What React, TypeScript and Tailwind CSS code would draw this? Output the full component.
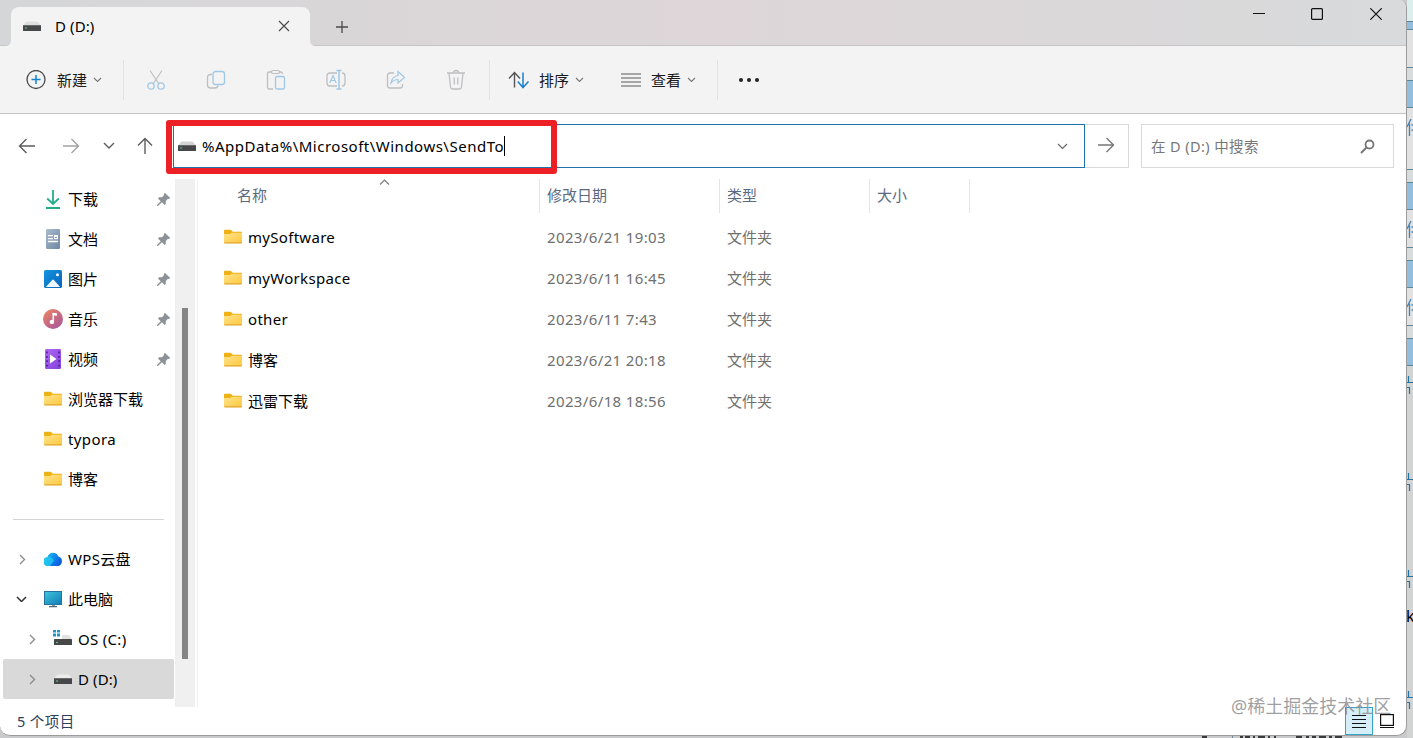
import React from "react";

type IconProps = { className?: string };

const FONT = "font-['Noto_Sans','Noto_Sans_CJK_SC',sans-serif]";

function Svg({ w, h, className = "", children }: { w: number; h: number; className?: string; children: React.ReactNode }) {
  return (
    <svg width={w} height={h} viewBox={`0 0 ${w} ${h}`} fill="none" className={`block shrink-0 ${className}`}>
      {children}
    </svg>
  );
}

function Drive({ top = "#dedede", className }: IconProps & { top?: string }) {
  return (
    <Svg w={18} h={18} className={className}>
      <path d="M3.500 4.500h11L18 8.500H0z" fill={top} />
      <rect x="0" y="8" width="18" height="6" rx="0.6" fill="#454748" />
      <rect x="0" y="8" width="18" height="1" fill="#6a6a6a" />
      <circle cx="3" cy="11" r="0.8" fill="#6fe0b0" />
    </Svg>
  );
}

function SystemDrive() {
  return (
    <Svg w={19} h={18}>
      <path d="M9 5h7l3 4H9z" fill="#e2e2e2" />
      <rect x="1" y="9" width="18" height="6" rx="0.6" fill="#454748" />
      <circle cx="4" cy="12.500" r="0.8" fill="#6fe0b0" />
      <path d="M0 0h3v2.500H0zM4 0h3v2.500H4zM0 3.500h3v3H0zM4 3.500h3v3H4z" fill="#1c96c8" />
    </Svg>
  );
}

function Folder() {
  return (
    <Svg w={18} h={18}>
      <defs>
        <linearGradient id="folder" x1="0" y1="0" x2="1" y2="1">
          <stop stopColor="#ffe38b" />
          <stop offset="1" stopColor="#fdc83d" />
        </linearGradient>
      </defs>
      <path d="M0 2.500q0-.8.8-.8h5.300q.6 0 1 .4l1.700 1.600h8.400q.8 0 .8.800v6H0z" fill="#eeb116" />
      <path d="M0 6h6.200l1.600-1.300H18V14.500q0 .8-.8.8H.8q-.8 0-.8-.8z" fill="url(#folder)" />
      <path d="M0 14.200h18v.4q0 .8-.8.8H.8q-.8 0-.8-.8z" fill="#e2a93a" />
    </Svg>
  );
}

function Download() {
  return (
    <Svg w={18} h={20}>
      <path d="M9 1v14M3.200 9.500l5.800 5.500L14.800 9.500" stroke="#23ae8b" strokeWidth="1.800" />
      <path d="M2 19h14" stroke="#23ae8b" strokeWidth="2" />
    </Svg>
  );
}

function Doc() {
  return (
    <Svg w={18} h={20}>
      <defs>
        <linearGradient id="doc" x1="0" y1="0" x2="1" y2="1">
          <stop stopColor="#a9bccd" />
          <stop offset="1" stopColor="#6d87a2" />
        </linearGradient>
      </defs>
      <rect x="2" y="0" width="14" height="20" rx="1.200" fill="url(#doc)" />
      <path d="M4 6.700h5M4 9.600h5M4 12.500h10" stroke="#fff" strokeWidth="1.300" />
      <rect x="10" y="6" width="4" height="4.200" fill="#fff" />
      <path d="M11 8.500h2" stroke="#8097ad" />
    </Svg>
  );
}

function Picture() {
  return (
    <Svg w={18} h={18}>
      <defs>
        <linearGradient id="pic" x1="0" y1="0" x2="1" y2="1">
          <stop stopColor="#1495e0" />
          <stop offset="1" stopColor="#0862b8" />
        </linearGradient>
      </defs>
      <rect width="18" height="18" rx="1.500" fill="url(#pic)" />
      <path d="M1.800 17 8.200 10q.8-.8 1.600 0l6.400 7z" fill="#eef7ff" />
      <circle cx="13.500" cy="4.700" r="1.500" fill="#fff" />
    </Svg>
  );
}

function Music() {
  return (
    <Svg w={20} h={20} className="-mx-px">
      <defs>
        <linearGradient id="mus" x1="0" y1="0" x2="0.8" y2="1">
          <stop stopColor="#f08561" />
          <stop offset="1" stopColor="#a9579c" />
        </linearGradient>
      </defs>
      <circle cx="10" cy="10" r="10" fill="url(#mus)" />
      <path d="M10.300 4v8.500" stroke="#fff" strokeWidth="1.500" />
      <path d="M9.600 3.700 14 4.200v2.600l-4.400-.6z" fill="#fff" />
      <circle cx="8.900" cy="12.900" r="2.200" fill="#fff" />
    </Svg>
  );
}

function Video() {
  return (
    <Svg w={18} h={20}>
      <defs>
        <linearGradient id="vid" x1="0" y1="0" x2="1" y2="1">
          <stop stopColor="#b069f2" />
          <stop offset="1" stopColor="#8341dc" />
        </linearGradient>
      </defs>
      <rect x="1" y="0" width="16" height="20" rx="1.200" fill="url(#vid)" />
      <path d="M3 2.500v16M15 2.500v16" stroke="#4a1c92" strokeWidth="1.600" strokeDasharray="1.800 2.600" />
      <path d="M6 5.500v9l6.500-4.500z" fill="#fff" />
    </Svg>
  );
}

function Cloud() {
  return (
    <Svg w={18} h={16}>
      <defs>
        <linearGradient id="cloud" x1="0" y1="0" x2="1" y2="0.6">
          <stop stopColor="#2de0e0" />
          <stop offset="0.5" stopColor="#1293f2" />
          <stop offset="1" stopColor="#0c5ce0" />
        </linearGradient>
      </defs>
      <path d="M4.200 15A4.300 4.300 0 0 1 3.500 6 5.700 5.700 0 0 1 14.400 5.600a4.800 4.800 0 0 1-.8 9.400z" fill="url(#cloud)" />
      <path d="M3.500 6q4.500-.5 6.500 3.500L6 15H4.200A4.300 4.300 0 0 1 3.500 6" fill="#25cdf0" opacity=".75" />
    </Svg>
  );
}

function Monitor() {
  return (
    <Svg w={18} h={18}>
      <defs>
        <linearGradient id="mon" x1="0" y1="0" x2="1" y2="1">
          <stop stopColor="#3cc6dd" />
          <stop offset="1" stopColor="#147bb6" />
        </linearGradient>
      </defs>
      <rect x=".5" y="1.500" width="17" height="13" fill="url(#mon)" stroke="#23749f" />
      <path d="M8 15h3v1.300H8z" fill="#8b9aa5" />
      <path d="M5 16.600h8" stroke="#596771" strokeWidth="1.200" />
    </Svg>
  );
}

function Pin() {
  return (
    <Svg w={13} h={13}>
      <path d="M8 0 13 4.800 12.300 6 10.600 5.900 8.700 8.200 8.800 11 7.700 12 4.900 9.300 1 13 0 12.900 .1 12 3.700 8.200 1 5.400 2 4.200 4.900 4.300 7 2.200 7 .8z" fill="#8d9297" />
    </Svg>
  );
}

function Chevron({ dir = "down", w = 8, color = "#777", sw = 1.1 }: { dir?: "down" | "right" | "up"; w?: number; color?: string; sw?: number }) {
  const h = w / 2 + 2;
  if (dir === "right")
    return (
      <Svg w={h} h={w + 2}>
        <path d={`M1 1 ${h - 1} ${w / 2 + 1} 1 ${w + 1}`} stroke={color} strokeWidth={sw} />
      </Svg>
    );
  return (
    <Svg w={w + 2} h={h}>
      <path d={dir === "down" ? `M1 1 ${w / 2 + 1} ${h - 1} ${w + 1} 1` : `M1 ${h - 1} ${w / 2 + 1} 1 ${w + 1} ${h - 1}`} stroke={color} strokeWidth={sw} />
    </Svg>
  );
}

function Arrow({ color, className = "" }: { color: string; className?: string }) {
  return (
    <Svg w={18} h={16} className={className}>
      <path d="M1 8h15.500M9.500 1l7 7-7 7" stroke={color} strokeWidth="1.400" />
    </Svg>
  );
}

const GRAY = "#bdbfc1";
const BLUE = "#9fc8e6";

const tools: React.ReactNode[] = [
  <Svg w={20} h={22} key="cut">
    <path d="M4 1.500 13 15M16 1.500 7 15" stroke={GRAY} strokeWidth="1.200" />
    <circle cx="5" cy="17" r="3.200" stroke={BLUE} strokeWidth="1.300" />
    <circle cx="15" cy="17" r="3.200" stroke={BLUE} strokeWidth="1.300" />
  </Svg>,
  <Svg w={20} h={20} key="copy">
    <path d="M6 4.500H4.500Q1.500 4.500 1.500 7.500v7.500q0 3 3 3H9q2.500 0 3-2.500" stroke={GRAY} strokeWidth="1.300" />
    <rect x="7" y="1.500" width="11.500" height="13" rx="2.500" stroke={BLUE} strokeWidth="1.300" />
  </Svg>,
  <Svg w={20} h={22} key="paste">
    <path d="M5 3H3Q1.500 3 1.500 4.500v14Q1.500 20 3 20h4M13 3h2q1.300 0 1.500 2" stroke={GRAY} strokeWidth="1.300" />
    <rect x="5.500" y="1.500" width="8" height="3" rx="1.500" stroke={GRAY} strokeWidth="1.200" />
    <rect x="9.500" y="7.500" width="9" height="12.500" rx="1.500" stroke={BLUE} strokeWidth="1.300" />
  </Svg>,
  <Svg w={20} h={22} key="rename">
    <path d="M11 4H4Q1 4 1 7v7q0 3 3 3h7M16 4q3 0 3 3v7q0 3-3 3" stroke={GRAY} strokeWidth="1.300" />
    <path d="M3.800 14 7 6.500l3.200 7.500M5 11.500h4" stroke={BLUE} strokeWidth="1.200" />
    <path d="M10.500 1.500h5M10.500 20h5M13 1.500V20" stroke={BLUE} strokeWidth="1.500" />
  </Svg>,
  <Svg w={20} h={20} key="share">
    <path d="M8 3H4Q1.500 3 1.500 5.500v10Q1.500 18 4 18h10q2.500 0 2.500-2.500V14" stroke={GRAY} strokeWidth="1.300" />
    <path d="M12 1.500 18.500 7.500 12 13V9.500Q8 9.500 5 13 6 6.500 12 5.500z" stroke={BLUE} strokeWidth="1.200" />
  </Svg>,
  <Svg w={20} h={22} key="delete">
    <path d="M1 4h18M3 4l1.500 14Q4.800 20 6.500 20h7q1.700 0 2-2L17 4M7.500 4q0-2.500 2.500-2.500T12.500 4M8.200 8.500v7M11.800 8.500v7" stroke={GRAY} strokeWidth="1.300" />
  </Svg>,
];

function Toolbar() {
  return (
    <div className="flex h-[68px] items-center border-b border-[#c6c6c6] bg-[#f4f3f4] pl-[26px]">
      <div className="flex w-[97px] items-center">
        <Svg w={20} h={20}>
          <circle cx="10" cy="9.500" r="9" stroke="#4a4a4a" strokeWidth="1.300" />
          <path d="M10 5v9M5.500 9.500h9" stroke="#1582d0" strokeWidth="1.500" />
        </Svg>
        <span className="ml-[11px] mr-[6px]">新建</span>
        <Chevron w={7} />
      </div>
      <div className="h-10 w-px bg-[#e2e2e2]" />
      <div className="ml-[22px] flex items-center gap-10">{tools}</div>
      <div className="ml-[23px] h-10 w-px bg-[#e2e2e2]" />
      <div className="ml-[18px] flex w-[113px] items-center">
        <Svg w={22} h={20}>
          <path d="M6.500 17.500V3M1 8.500l5.500-6 5.500 6" stroke="#555" strokeWidth="1.400" />
          <path d="M15 2.500V17M9.800 11.500 15 17.500l5.500-6" stroke="#1a80cc" strokeWidth="1.500" />
        </Svg>
        <span className="ml-[9px] mr-[6px]">排序</span>
        <Chevron w={7} />
      </div>
      <div className="flex w-[96px] items-center">
        <Svg w={20} h={16}>
          <path d="M0 2h20M0 6h20M0 10h20M0 14h20" stroke="#5a5a5a" strokeWidth="1.100" />
        </Svg>
        <span className="ml-[10px] mr-[6px]">查看</span>
        <Chevron w={7} />
      </div>
      <div className="h-10 w-px bg-[#e2e2e2]" />
      <Svg w={22} h={6} className="ml-[20px] mt-px">
        <circle cx="3" cy="3" r="2" fill="#222" />
        <circle cx="11" cy="3" r="2" fill="#222" />
        <circle cx="19" cy="3" r="2" fill="#222" />
      </Svg>
    </div>
  );
}

function TitleBar() {
  return (
    <div className="flex h-[46px] border-b border-[#c6c6c6] bg-linear-to-r from-[#d5d6d8] via-[#ded6d8] to-[#d8dadb] pl-[11px]">
      <div className="relative mt-[7px] flex h-[39px] w-[299px] items-center rounded-t-[8px] bg-[#f4f3f4] pb-[2px]">
        <Svg w={6} h={6} className="absolute bottom-0 -left-[6px]">
          <path d="M6 0v6H0Q6 6 6 0" fill="#f4f3f4" />
        </Svg>
        <Svg w={6} h={6} className="absolute bottom-0 -right-[6px]">
          <path d="M0 0v6h6Q0 6 0 0" fill="#f4f3f4" />
        </Svg>
        <Drive className="ml-3" />
        <span className="ml-[14px] w-[223px] tracking-[0.1px] text-black">D (D:)</span>
        <Svg w={12} h={12}>
          <path d="M1 1 11 11M11 1 1 11" stroke="#4b4b4b" strokeWidth="1.200" />
        </Svg>
      </div>
      <Svg w={12} h={12} className="ml-[26px] mt-[21px]">
        <path d="M6 0v12M0 6h12" stroke="#4b4b4b" strokeWidth="1.300" />
      </Svg>
      <div className="ml-auto flex gap-[46px] pr-[24px] pt-2">
        <Svg w={12} h={12} className="-ml-px mr-px">
          <path d="M0 5.500h12" stroke="#111" />
        </Svg>
        <Svg w={12} h={12} className="-ml-px mr-px">
          <rect x=".6" y=".6" width="10.800" height="10.800" rx="1" stroke="#111" strokeWidth="1.200" />
        </Svg>
        <Svg w={12} h={12}>
          <path d="M.3.3 11.700 11.700M11.700.3.3 11.700" stroke="#111" strokeWidth="1.200" />
        </Svg>
      </div>
    </div>
  );
}

function NavBar() {
  return (
    <div className="relative flex h-[65px] items-start pt-[10px]">
      <div className="flex h-11 w-[173px] items-center">
        <Arrow color="#5c5c5c" className="ml-[18px] rotate-180" />
        <Arrow color="#a2a2a2" className="ml-[26px]" />
        <div className="-mt-px ml-[23px]">
          <Chevron w={10} color="#5c5c5c" sw={1.4} />
        </div>
        <Arrow color="#5c5c5c" className="ml-[21px] -rotate-90" />
      </div>
      <div className="flex h-11 w-[912px] items-center border border-[#1f72ac] pl-1">
        <Drive top="#d4d4d4" />
        <span className="ml-[6px] whitespace-nowrap tracking-[0.5px] text-black">%AppData%\Microsoft\Windows\SendTo</span>
        <div className="h-5 w-px bg-black" />
        <div className="ml-auto mr-[16px]">
          <Chevron w={9} color="#666" />
        </div>
      </div>
      <div className="flex h-11 w-11 items-center border border-l-0 border-[#d9d9d9] pl-3">
        <Arrow color="#777" className="-mt-[2px]" />
      </div>
      <div className="ml-3 flex h-11 w-[253px] items-center justify-between border border-[#d9d9d9] pl-[9px] pr-[18px] text-[14.5px] text-[#777]">
        <span className="tracking-[0.4px]">在 D (D:) 中搜索</span>
        <Svg w={15} h={15}>
          <circle cx="9.500" cy="5.500" r="4" stroke="#777" strokeWidth="1.800" />
          <path d="M6.700 8.300 1 14" stroke="#777" strokeWidth="2" />
        </Svg>
      </div>
      <div className="absolute left-[166px] top-[6px] h-[54px] w-[391px] rounded-[3px] border-[6px] border-[#ec2025]" />
    </div>
  );
}

const pinned: { label: string; icon: React.ReactNode; pin?: boolean }[] = [
  { label: "下载", icon: <Download />, pin: true },
  { label: "文档", icon: <Doc />, pin: true },
  { label: "图片", icon: <Picture />, pin: true },
  { label: "音乐", icon: <Music />, pin: true },
  { label: "视频", icon: <Video />, pin: true },
  { label: "浏览器下载", icon: <Folder /> },
  { label: "typora", icon: <Folder /> },
  { label: "博客", icon: <Folder /> },
];

function Sidebar() {
  return (
    <div className="w-[175px] text-black">
      {pinned.map((p) => (
        <div key={p.label} className="flex h-10 items-center pl-11 pr-[5px]">
          {p.icon}
          <span className={`ml-[6px] flex-1 whitespace-nowrap ${p.label === "typora" ? "tracking-[0.4px]" : ""}`}>{p.label}</span>
          {p.pin && <Pin />}
        </div>
      ))}
      <div className="flex h-10 items-center pl-[13px] pr-[11px]">
        <div className="mt-px h-px flex-1 bg-[#d4d4d4]" />
      </div>
      <div className="flex h-10 items-center">
        <div className="ml-[19px] w-[25px]">
          <Chevron dir="right" w={9} color="#8c8c8c" sw={1.4} />
        </div>
        <Cloud />
        <span className="ml-[6px] tracking-[0.3px]">WPS云盘</span>
      </div>
      <div className="flex h-10 items-center">
        <div className="ml-4 w-7">
          <Chevron w={9} color="#333" sw={1.5} />
        </div>
        <Monitor />
        <span className="ml-[6px]">此电脑</span>
      </div>
      <div className="flex h-10 items-center">
        <div className="ml-[29px] w-6">
          <Chevron dir="right" w={9} color="#8c8c8c" sw={1.4} />
        </div>
        <SystemDrive />
        <span className="ml-[6px] tracking-[0.3px]">OS (C:)</span>
      </div>
      <div className="ml-[3px] flex h-10 w-[171px] items-center rounded-[2px] bg-[#d9d9d9]">
        <div className="ml-[26px] w-[25px]">
          <Chevron dir="right" w={9} color="#8c8c8c" sw={1.4} />
        </div>
        <Drive top="#ececec" />
        <span className="ml-[6px] tracking-[0.1px]">D (D:)</span>
      </div>
    </div>
  );
}

const files = [
  ["mySoftware", "2023/6/21 19:03"],
  ["myWorkspace", "2023/6/11 16:45"],
  ["other", "2023/6/11 7:43"],
  ["博客", "2023/6/21 20:18"],
  ["迅雷下载", "2023/6/18 18:56"],
];

function FileList() {
  return (
    <div className="flex-1">
      <div className="relative mb-[3px] flex h-[34px] text-[#5b6a80]">
        <div className="flex w-[342px] items-center border-r border-[#e4e4e4] pb-[2px] pl-[39px]">名称</div>
        <div className="flex w-[180px] items-center border-r border-[#e4e4e4] pb-[2px] pl-[7px]">修改日期</div>
        <div className="flex w-[150px] items-center border-r border-[#e4e4e4] pb-[2px] pl-[7px]">类型</div>
        <div className="flex w-[100px] items-center border-r border-[#e4e4e4] pb-[2px] pl-[7px]">大小</div>
        <div className="absolute left-[181px] top-0">
          <Chevron dir="up" w={9} color="#777" />
        </div>
      </div>
      {files.map(([name, date]) => (
        <div key={name} className="flex h-[41px] items-center text-[#6f6f6f]">
          <div className="flex w-[349px] items-center pl-[26px] text-black">
            <Folder />
            <span className={`ml-[6px] ${/^[a-z]/.test(name) ? "tracking-[0.3px]" : ""}`}>{name}</span>
          </div>
          <div className="w-[180px] tracking-[0.37px]">{date}</div>
          <div>文件夹</div>
        </div>
      ))}
    </div>
  );
}

function StatusBar() {
  return (
    <div className="relative flex h-[28px] items-center pl-[17px] text-[14.500px] text-[#2c405a]">
      <span className="tracking-[0.4px]">5 个项目</span>
      <div className="ml-auto flex h-full items-start pr-[12px]">
        <div className="flex h-[28px] w-[28px] items-center justify-center border border-[#35a5cb] bg-[#d5eef8]">
          <Svg w={14} h={14} className="mt-[2px]">
            <path d="M0 .5h14M0 4.500h14M0 8.500h14M0 12.500h14" stroke="#111" />
          </Svg>
        </div>
        <Svg w={14} h={15} className="ml-[7px] mt-[7px]">
          <rect x=".6" y=".6" width="12.800" height="10.800" stroke="#111" strokeWidth="1.200" />
          <path d="M0 13.500h14" stroke="#111" />
        </Svg>
      </div>
      <span className="absolute -top-[14px] left-[1231px] whitespace-nowrap text-[18px] leading-[26px] text-[#8e8e8e]/85">@稀土掘金技术社区</span>
    </div>
  );
}

const panes = [
  { pad: "h-[21px]", fill: "h-[9px]", body: "h-[38px]", glyph: false },
  { pad: "h-[12px]", fill: "h-[28px]", body: "h-[62px]", glyph: true },
  { pad: "h-[12px]", fill: "h-[28px]", body: "h-[38px]", glyph: true },
  { pad: "h-[12px]", fill: "h-[28px]", body: "h-[38px]", glyph: true },
  { pad: "h-[12px]", fill: "h-[28px]", body: "h-[374px]", glyph: false },
];

function Background() {
  return (
    <div className="relative h-full w-[6px] overflow-hidden bg-[#d6d7d7]">
      {panes.map((p, i) => (
        <div key={i}>
          <div className={`${p.pad} ${i === 0 ? "bg-[#dcefed]" : "bg-[#d9dcdc]"}`} />
          <div className={`${p.fill} border-y border-[#5b8797] bg-[#93bedd]`} />
          <div className={`${p.body} overflow-hidden ${i < 4 ? "border-b border-[#5b8797] bg-[#e2e2e2]" : "bg-[#d2d3d3]"} pt-[11px]`}>
            {p.glyph && (
              <Svg w={6} h={18}>
                <path d="M4 0 0 8M2.500 4.500V17M4.500 6H6M4.500 11H6" stroke="#4384b8" strokeWidth="1.300" />
              </Svg>
            )}
          </div>
        </div>
      ))}
      {["top-[376px]", "top-[473px]", "top-[570px]", "top-[691px]"].map((t) => (
        <Svg w={6} h={18} key={t} className={`absolute left-0 ${t}`}>
          <path d="M1.500 0v6M0 6.500h6M0 11.500h2.500V18" stroke="#2474a5" strokeWidth="1.200" />
        </Svg>
      ))}
      <span className="absolute -left-px top-[604px] text-[16px] leading-6 text-black">k</span>
    </div>
  );
}

function BottomEdge() {
  return (
    <Svg w={150} h={2} className="absolute bottom-0 left-[1201px]">
      <path d="M1 1h5M39 1h3M44 1h5M52 1h2M57 1h7M67 1h2M73 1h2M95 1h6M105 1h3M111 1h4M118 1h7M128 1h3M134 1h7" stroke="#3a3a3a" strokeWidth="2" />
      <path d="M31.500 0v2" stroke="#6f8790" />
    </Svg>
  );
}

export default function App() {
  return (
    <div className={`relative flex h-[738px] w-[1413px] overflow-hidden bg-[#c9cacb] text-[15px] leading-5 text-[#1b1b1b] ${FONT}`}>
      <div className="relative z-10 h-[736px] w-[1407px] overflow-hidden rounded-b-[10px] rounded-tr-[8px] border-b border-r border-[#9c9c9c] bg-white">
        <TitleBar />
        <Toolbar />
        <NavBar />
        <div className="flex h-[528px]">
          <Sidebar />
          <div className="h-full w-5 bg-[#f0f0f0] pl-[7px] pt-[129px]">
            <div className="h-[351px] w-[6px] bg-[#858585]" />
          </div>
          <div className="ml-[2px] w-px bg-[#f1f1f1]" />
          <FileList />
        </div>
        <StatusBar />
      </div>
      <Background />
      <BottomEdge />
    </div>
  );
}
